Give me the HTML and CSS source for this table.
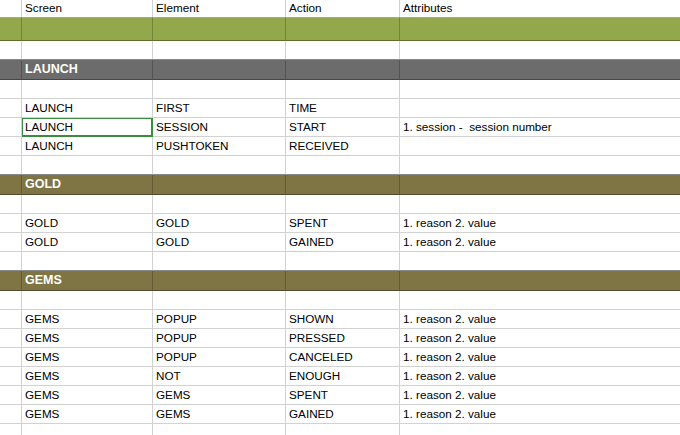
FILE: index.html
```html
<!DOCTYPE html>
<html>
<head>
<meta charset="utf-8">
<link rel="stylesheet" href="styles.css">
</head>
<body>
<div class="sheet">
  <div class="row head"><div class="c"></div><div class="c">Screen</div><div class="c">Element</div><div class="c">Action</div><div class="c">Attributes</div></div>
  <div class="row band green"><div class="c"></div><div class="c"></div><div class="c"></div><div class="c"></div><div class="c"></div></div>
  <div class="row"><div class="c"></div><div class="c"></div><div class="c"></div><div class="c"></div><div class="c"></div></div>
  <div class="row band gray"><div class="c"></div><div class="c">LAUNCH</div><div class="c"></div><div class="c"></div><div class="c"></div></div>
  <div class="row"><div class="c"></div><div class="c"></div><div class="c"></div><div class="c"></div><div class="c"></div></div>
  <div class="row"><div class="c"></div><div class="c">LAUNCH</div><div class="c">FIRST</div><div class="c">TIME</div><div class="c"></div></div>
  <div class="row"><div class="c"></div><div class="c sel">LAUNCH</div><div class="c">SESSION</div><div class="c">START</div><div class="c">1. session - &nbsp;session number</div></div>
  <div class="row"><div class="c"></div><div class="c">LAUNCH</div><div class="c">PUSHTOKEN</div><div class="c">RECEIVED</div><div class="c"></div></div>
  <div class="row"><div class="c"></div><div class="c"></div><div class="c"></div><div class="c"></div><div class="c"></div></div>
  <div class="row band olive"><div class="c"></div><div class="c">GOLD</div><div class="c"></div><div class="c"></div><div class="c"></div></div>
  <div class="row"><div class="c"></div><div class="c"></div><div class="c"></div><div class="c"></div><div class="c"></div></div>
  <div class="row"><div class="c"></div><div class="c">GOLD</div><div class="c">GOLD</div><div class="c">SPENT</div><div class="c">1. reason 2. value</div></div>
  <div class="row"><div class="c"></div><div class="c">GOLD</div><div class="c">GOLD</div><div class="c">GAINED</div><div class="c">1. reason 2. value</div></div>
  <div class="row"><div class="c"></div><div class="c"></div><div class="c"></div><div class="c"></div><div class="c"></div></div>
  <div class="row band olive"><div class="c"></div><div class="c">GEMS</div><div class="c"></div><div class="c"></div><div class="c"></div></div>
  <div class="row"><div class="c"></div><div class="c"></div><div class="c"></div><div class="c"></div><div class="c"></div></div>
  <div class="row"><div class="c"></div><div class="c">GEMS</div><div class="c">POPUP</div><div class="c">SHOWN</div><div class="c">1. reason 2. value</div></div>
  <div class="row"><div class="c"></div><div class="c">GEMS</div><div class="c">POPUP</div><div class="c">PRESSED</div><div class="c">1. reason 2. value</div></div>
  <div class="row"><div class="c"></div><div class="c">GEMS</div><div class="c">POPUP</div><div class="c">CANCELED</div><div class="c">1. reason 2. value</div></div>
  <div class="row"><div class="c"></div><div class="c">GEMS</div><div class="c">NOT</div><div class="c">ENOUGH</div><div class="c">1. reason 2. value</div></div>
  <div class="row"><div class="c"></div><div class="c">GEMS</div><div class="c">GEMS</div><div class="c">SPENT</div><div class="c">1. reason 2. value</div></div>
  <div class="row"><div class="c"></div><div class="c">GEMS</div><div class="c">GEMS</div><div class="c">GAINED</div><div class="c">1. reason 2. value</div></div>
  <div class="row"><div class="c"></div><div class="c"></div><div class="c"></div><div class="c"></div><div class="c"></div></div>
</div>
</body>
</html>
```

FILE: styles.css
```css
html, body {
  margin: 0;
  padding: 0;
  background: #ffffff;
}
body {
  font-family: "Liberation Sans", Arial, sans-serif;
  font-size: 11.7px;
  color: #000000;
  overflow: hidden;
  width: 680px;
  height: 435px;
}
.sheet {
  display: flex;
  flex-direction: column;
}
.row {
  display: grid;
  grid-template-columns: 22px 131px 133px 114px 1fr;
  height: 19px;
}
.c {
  border-right: 1px solid #d2d2d2;
  border-bottom: 1px solid #d2d2d2;
  padding: 0 3px;
  line-height: 18px;
  white-space: nowrap;
  overflow: hidden;
  box-sizing: border-box;
}
.c:last-child {
  border-right: none;
}
.row.head {
  height: 18px;
}
.row.head .c {
  border-bottom: none;
  line-height: 16px;
}
.band .c {
  border-right-color: rgba(0, 0, 0, 0.22);
  border-bottom-color: rgba(0, 0, 0, 0.35);
  border-top: 1px solid rgba(0, 0, 0, 0.35);
  color: #ffffff;
  font-weight: bold;
  font-size: 12.5px;
  line-height: 18px;
}
.band {
  height: 20px;
}
.band .c {
  margin-top: -1px;
  height: 21px;
}
.green {
  height: 23px;
}
.green .c {
  height: 24px;
}
.green { background: #93a84b; }
.gray { background: #6c6c6c; }
.olive { background: #7e7444; }
.sel {
  box-shadow: inset 0 0 0 1px #3d8b3d;
  border-bottom-color: #3d8b3d;
  border-right-color: #3d8b3d;
}
```
